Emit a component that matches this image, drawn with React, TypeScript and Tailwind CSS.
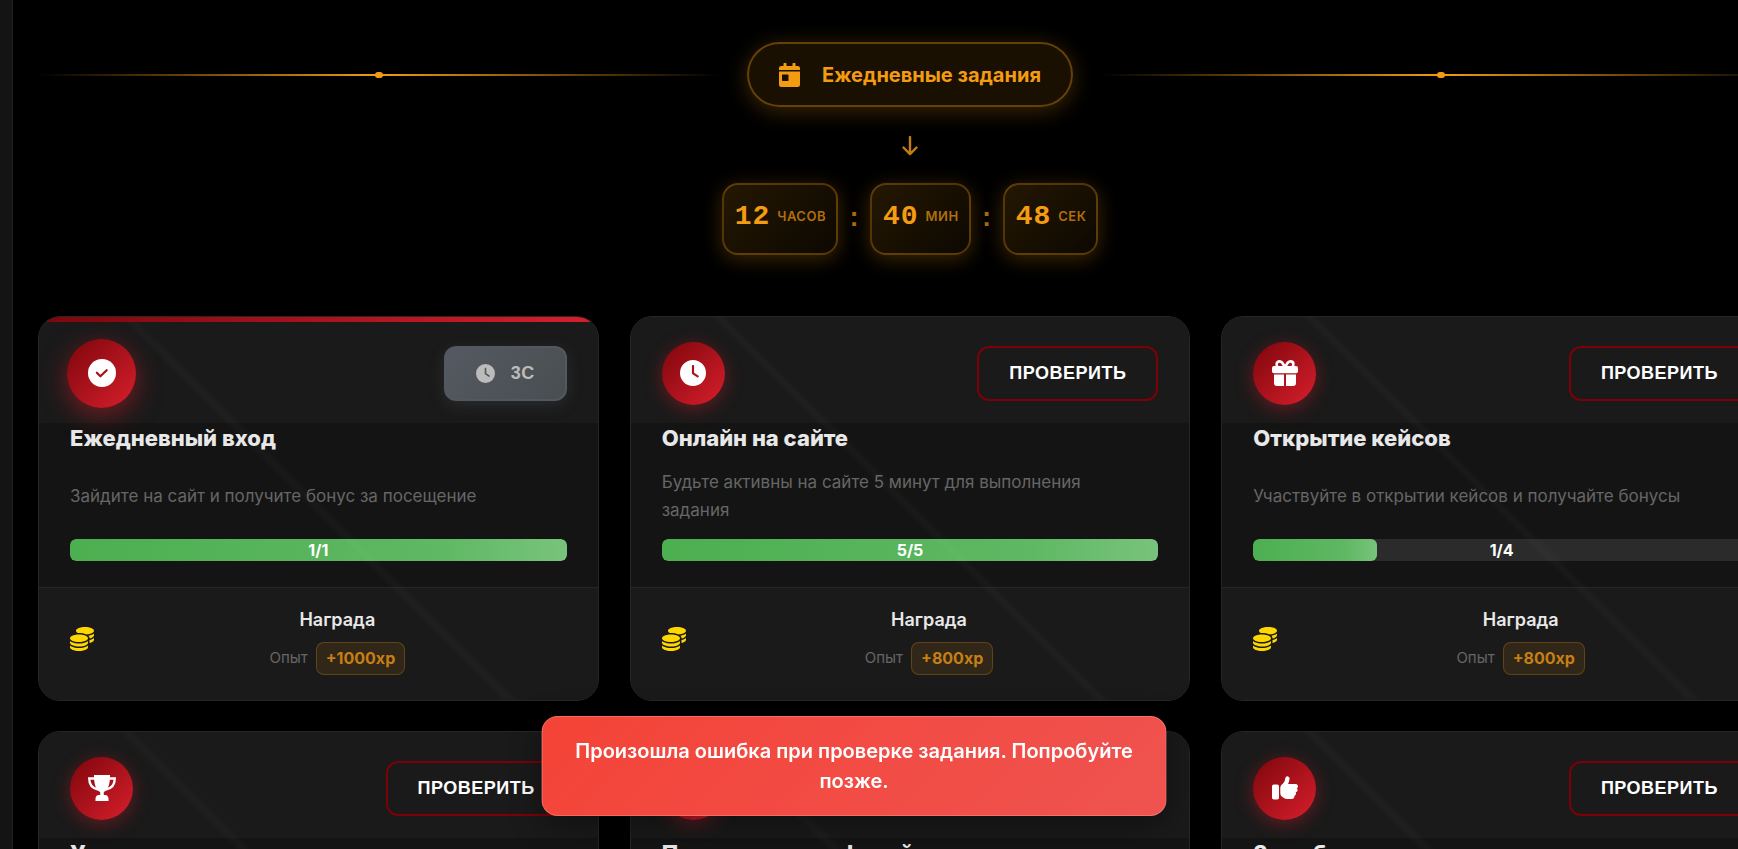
import type { ReactNode } from "react";
import { FaCoins } from "react-icons/fa6";

type IconProps = { className?: string };

const CheckIcon = ({ className }: IconProps) => (
  <svg viewBox="0 0 24 24" className={className} aria-hidden="true">
    <circle cx="12" cy="12" r="12" fill="currentColor" />
    <path d="M7.600 11.800l3 3 5.400-5.200" fill="none" stroke="#a90e19" strokeWidth="1.900" strokeLinecap="round" strokeLinejoin="round" />
  </svg>
);

const ClockIcon = ({ className }: IconProps) => (
  <svg viewBox="0 0 24 24" className={className} aria-hidden="true">
    <path
      fillRule="evenodd"
      fill="currentColor"
      d="M12 0a12 12 0 1 0 0 24 12 12 0 0 0 0-24zm0 4.600c.6 0 1 .4 1 1v6.100l3.900 2.600c.5.3.6.9.3 1.400-.3.5-.9.6-1.400.3l-4.300-2.900a1 1 0 0 1-.5-.9V5.600c0-.6.4-1 1-1z"
    />
  </svg>
);

const GiftIcon = ({ className }: IconProps) => (
  <svg viewBox="0 0 26 26" className={className} aria-hidden="true">
    <g fill="currentColor">
      <rect x="0" y="6" width="26" height="7.200" rx="2" />
      <path d="M2 14.500h10V26H5a3 3 0 0 1-3-3zM14 14.500h10V23a3 3 0 0 1-3 3h-7z" />
    </g>
    <path d="M12.600 7C11 3 9.500 1.400 7.600 1.400 5.800 1.400 4.600 2.600 4.600 4.200c0 1.200.5 2.200 1.200 2.800M13.400 7c1.600-4 3.100-5.600 5-5.600 1.800 0 3 1.200 3 2.800 0 1.200-.5 2.200-1.200 2.800" fill="none" stroke="currentColor" strokeWidth="2.600" />
  </svg>
);

const TrophyIcon = ({ className }: IconProps) => (
  <svg viewBox="0 0 28 26" className={className} aria-hidden="true">
    <path
      fill="currentColor"
      d="M6 0h16v1.500C22 10 19.500 15.500 15.800 17V20h1.700c1.500 0 2.500 1 2.500 2.500h.500V26H7.500v-3.500H8C8 21 9 20 10.500 20h1.700v-3C8.500 15.500 6 10 6 1.500z"
    />
    <path d="M7.500 3.500H1.200c0 6 3.300 10 9 11M20.500 3.500h6.300c0 6-3.300 10-9 11" fill="none" stroke="currentColor" strokeWidth="2.300" />
  </svg>
);

const ThumbIcon = ({ className }: IconProps) => (
  <svg viewBox="0 0 26 24" className={className} aria-hidden="true">
    <g fill="currentColor">
      <rect x="0" y="8.500" width="7" height="15" rx="1.800" />
      <path d="M15.500.3c1.400.3 2.300 1.600 2 3l-.2 1c-.2 1.300-.7 2.500-1.300 3.600h7.600c1.400 0 2.400 1 2.400 2.300 0 .9-.5 1.700-1.300 2.100.6.400.9 1.100.9 1.800 0 1.200-.8 2.100-1.900 2.400.2.300.3.700.3 1.100 0 1.100-.7 2-1.700 2.300.1.200.1.400.1.600 0 1.400-1.100 2.400-2.500 2.400h-5c-1.100 0-2-.3-2.900-.9l-2-1.300a4 4 0 0 1-1.700-3.200v-5.500c0-1.500.7-2.800 1.800-3.700l.4-.3c1.300-1.100 2.200-2.600 2.500-4.200l.2-1c.2-1.600 1.200-2.700 2.300-2.500z" />
    </g>
  </svg>
);

const CalendarIcon = ({ className }: IconProps) => (
  <svg viewBox="0 0 21 24" className={className} aria-hidden="true">
    <path
      fillRule="evenodd"
      fill="currentColor"
      d="M5.200 0h1.600c.5 0 .7.300.7.700V3h6V.7c0-.4.200-.7.700-.7h1.600c.5 0 .7.300.7.700V3h2.300A2.200 2.200 0 0 1 21 5.200V7H0V5.200A2.200 2.200 0 0 1 2.200 3h2.300V.7c0-.4.200-.7.700-.7zM0 8.500h21v13.300a2.200 2.200 0 0 1-2.200 2.200H2.200A2.200 2.200 0 0 1 0 21.800zM3.700 11.500c-.4 0-.7.300-.7.700v5.100c0 .4.300.7.700.7h5.100c.4 0 .7-.3.700-.7v-5.100c0-.4-.3-.7-.7-.7z"
    />
  </svg>
);

const ArrowDown = ({ className }: IconProps) => (
  <svg viewBox="0 0 16 20" className={className} aria-hidden="true">
    <path d="M8 1v17M1.500 11.500L8 18.200l6.500-6.700" fill="none" stroke="currentColor" strokeWidth="2.400" strokeLinecap="round" strokeLinejoin="round" />
  </svg>
);

type Task = {
  title: string;
  text: string;
  done: number;
  total: number;
  xp: number;
  icon: ReactNode;
  active?: boolean;
};

const tasks: Task[] = [
  { title: "Ежедневный вход", text: "Зайдите на сайт и получите бонус за посещение", done: 1, total: 1, xp: 1000, icon: <CheckIcon className="size-7" />, active: true },
  { title: "Онлайн на сайте", text: "Будьте активны на сайте 5 минут для выполнения задания", done: 5, total: 5, xp: 800, icon: <ClockIcon className="size-6.5" /> },
  { title: "Открытие кейсов", text: "Участвуйте в открытии кейсов и получайте бонусы", done: 1, total: 4, xp: 800, icon: <GiftIcon className="size-6.5" /> },
  { title: "Участник еженедельного розыгрыша", text: "Примите участие в еженедельном розыгрыше", done: 0, total: 1, xp: 800, icon: <TrophyIcon className="h-6.5 w-7" /> },
  { title: "Посетитель профилей", text: "Посетите профили других пользователей", done: 0, total: 5, xp: 800, icon: <ClockIcon className="size-6.5" /> },
  { title: "Знак благодарности", text: "Поставьте отметку «Нравится»", done: 0, total: 1, xp: 800, icon: <ThumbIcon className="h-6 w-6.5" /> },
];

function Divider() {
  return (
    <div className="relative h-0.5 flex-1 bg-[linear-gradient(90deg,transparent,#f39c12,transparent)]">
      <span className="absolute top-1/2 left-1/2 h-1.5 w-2 -translate-x-1/2 -translate-y-1/2 rounded-full bg-[#f39c12]" />
    </div>
  );
}

function TimeBox({ value, label }: { value: string; label: string }) {
  return (
    <div className="flex h-18 items-center gap-[7px] rounded-2xl border-2 border-[#f39c12]/30 bg-linear-135 from-[#f39c12]/15 to-[#f39c12]/5 pr-2.5 pb-1 pl-[11px] shadow-[0_4px_20px_rgba(243,156,18,0.25)]">
      <span className="font-['Liberation_Mono',monospace] text-[28px] leading-9 font-bold tracking-[1px] text-[#f39c12]">{value}</span>
      <span className="text-[13px] font-semibold tracking-[0.5px] text-[#f39c12]/70 uppercase">{label}</span>
    </div>
  );
}

function Colon() {
  return <span className="w-8 text-center font-['Liberation_Mono',monospace] text-[26px] leading-8 font-bold text-[#f39c12]/70">:</span>;
}

function TaskCard({ task }: { task: Task }) {
  return (
    <article className="relative overflow-hidden rounded-[22px] border border-[#262626] bg-[#141414]">
      {task.active && <div className="absolute inset-x-0 top-0 z-10 h-[5px] bg-linear-to-r from-[#7f060c] to-[#d81f2c]" />}
      <header className="flex h-[106px] items-center justify-between bg-[#1a1a1a] px-[31px] pt-1.5">
        <div
          className={
            task.active
              ? "z-10 -mx-[3px] flex size-[69px] items-center justify-center rounded-full bg-linear-135 from-[#7f060c] to-[#d81f2c] text-white shadow-[0_7px_26px_rgba(216,31,44,0.5)]"
              : "z-10 flex size-[63px] items-center justify-center rounded-full bg-linear-135 from-[#7f060c] to-[#d81f2c] text-white shadow-[0_4px_18px_rgba(216,31,44,0.4)]"
          }
        >
          {task.icon}
        </div>
        {task.active ? (
          <button
            type="button"
            disabled
            className="flex h-[55px] items-center gap-4 rounded-xl border-2 border-[#51585f] bg-linear-135 from-[#555962] to-[#494e51] px-[30px] font-['Liberation_Sans',sans-serif] text-lg font-bold tracking-[0.5px] text-[#bbbbbb] shadow-[0_4px_16px_rgba(108,117,125,0.2)]"
          >
            <ClockIcon className="size-[19px]" />
            3С
          </button>
        ) : (
          <button
            type="button"
            className="h-[55px] rounded-xl border-2 border-[#7d0008] px-[30px] font-['Liberation_Sans',sans-serif] text-lg font-bold tracking-[0.5px] text-white"
          >
            ПРОВЕРИТЬ
          </button>
        )}
      </header>
      <div className="px-[31px] pb-[26px]">
        <h3 className="text-[22px] leading-[30px] font-extrabold text-[#e8e8e8]">{task.title}</h3>
        <div className="my-[15px] flex h-14 items-center pr-6">
          <p className="text-[17px] leading-7 text-[#666666]">{task.text}</p>
        </div>
        <div className="relative h-[22px] overflow-hidden rounded-md bg-[#2b2b2b]">
          <div
            className="h-full rounded-md bg-[linear-gradient(90deg,transparent_75%,rgba(255,255,255,0.12)),linear-gradient(90deg,#4caf50,#66bb6a)]"
            style={{ width: `${(task.done / task.total) * 100}%` }}
          />
          <span className="absolute inset-0 text-center text-base leading-[22px] font-bold text-white">
            {task.done}/{task.total}
          </span>
        </div>
      </div>
      <footer className="flex h-[113px] items-center gap-3.5 border-t border-[#262626] bg-[#1a1a1a] px-[31px]">
        <FaCoins className="mb-2.5 size-6 text-[#ffd700]" />
        <div className="flex flex-1 flex-col items-center gap-2.5 pb-1.5">
          <span className="text-lg leading-6 font-semibold text-[#e8e8e8]">Награда</span>
          <span className="flex items-center gap-2">
            <span className="text-[15px] leading-6 text-[#666666]">Опыт</span>
            <span className="rounded-lg border border-[#f39c12]/25 bg-[#f39c12]/10 px-[9px] py-1 text-base leading-[23px] font-bold text-[#c77f14]">
              +{task.xp}xp
            </span>
          </span>
        </div>
      </footer>
      <div className="pointer-events-none absolute inset-0 bg-[linear-gradient(45deg,transparent_49%,rgba(255,255,255,0.025)_50%,transparent_51%)]" />
    </article>
  );
}

export default function App() {
  return (
    <div className="flex h-screen overflow-hidden bg-black font-['Inter','Noto_Sans',sans-serif] text-white">
      <aside className="w-[13px] shrink-0 border-r border-[#222222] bg-[#141414]" />
      <main className="w-[calc(100%+56px)] shrink-0 px-[25px] pt-[42px]">
        <div className="flex items-center gap-[27px]">
          <Divider />
          <div className="flex h-[65px] items-center gap-[22px] rounded-full border-2 border-[#f39c12]/35 bg-[#f39c12]/10 px-[30px] text-[#f39c12] shadow-[0_4px_22px_rgba(243,156,18,0.25)]">
            <CalendarIcon className="h-6 w-[21px]" />
            <h2 className="text-xl font-bold">Ежедневные задания</h2>
          </div>
          <Divider />
        </div>
        <div className="flex justify-center pt-[29px]">
          <ArrowDown className="h-5 w-4 text-[#f39c12]/80" />
        </div>
        <div className="mt-[27px] flex items-center justify-center">
          <TimeBox value="12" label="часов" />
          <Colon />
          <TimeBox value="40" label="мин" />
          <Colon />
          <TimeBox value="48" label="сек" />
        </div>
        <section className="mt-[61px] grid grid-cols-3 gap-x-[31px] gap-y-[30px]">
          {tasks.map((task) => (
            <TaskCard key={task.title} task={task} />
          ))}
        </section>
      </main>
      <div
        role="alert"
        className="fixed bottom-[33px] left-[calc(50%-15px)] z-20 w-[625px] -translate-x-1/2 rounded-2xl border border-white/20 bg-linear-135 from-[#f44336] to-[#ef5350] px-[30px] py-[19px] text-center text-xl leading-[30px] font-semibold shadow-[0_8px_32px_rgba(0,0,0,0.4)]"
      >
        Произошла ошибка при проверке задания. Попробуйте позже.
      </div>
    </div>
  );
}
